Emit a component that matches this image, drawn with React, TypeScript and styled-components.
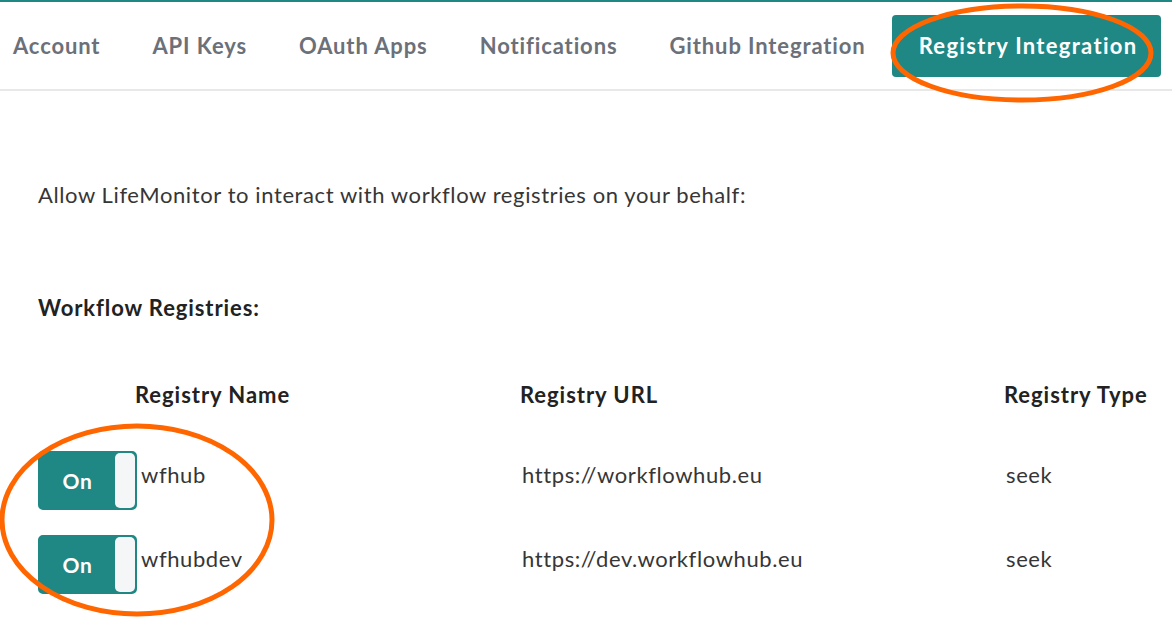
import styled, { createGlobalStyle } from "styled-components";

const teal = "#1f8784";

const GlobalStyle = createGlobalStyle`
	body {
		margin: 0;
		background: #fff;
		font-family: Lato, "Open Sans", sans-serif;
		color: #363636;
	}
`;

const Page = styled.div`
	position: relative;
	width: 1172px;
	height: 639px;
	overflow: hidden;
	box-sizing: border-box;
	border-top: 2px solid ${teal};
`;

const TabBar = styled.nav`
	display: flex;
	align-items: center;
	height: 87px;
	margin-left: -13px;
	border-bottom: 2px solid #e8e8e8;
`;

const Tab = styled.a<{ $active?: boolean }>`
	display: flex;
	align-items: center;
	height: 62px;
	padding: ${(p) => (p.$active ? "0 24px 0 27px" : "0 26px")};
	border-radius: 4px;
	font-size: 22px;
	font-weight: 700;
	letter-spacing: ${(p) => (p.$active ? "1.3px" : "0.88px")};
	white-space: nowrap;
	color: ${(p) => (p.$active ? "#fff" : "#6b7079")};
	background: ${(p) => (p.$active ? teal : "transparent")};
	cursor: pointer;
`;

const Content = styled.main`
	padding: 0 38px;
	font-size: 22px;
	letter-spacing: 0.6px;
`;

const Intro = styled.p`
	margin: 87px 0 0 0;
	line-height: 33px;
`;

const SectionTitle = styled.h3`
	margin: 80px 0 0 0;
	font-size: 22px;
	font-weight: 700;
	letter-spacing: 0.9px;
	line-height: 33px;
	color: #222;
`;

const Grid = styled.div`
	display: grid;
	grid-template-columns: 99px 385px 484px 1fr;
	margin-top: 54px;
	row-gap: 25px;
	align-items: center;
`;

const Head = styled.div`
	font-weight: 700;
	letter-spacing: 0.95px;
	white-space: nowrap;
	color: #222;
	line-height: 33px;
	margin-left: -2px;
	margin-bottom: 15px;
`;

const Cell = styled.div<{ $indent?: boolean }>`
	line-height: 33px;
	white-space: nowrap;
	padding-left: ${(p) => (p.$indent ? "4px" : "0")};
	margin-top: -12px;
`;

const Toggle = styled.button`
	display: flex;
	width: 99px;
	height: 59px;
	padding: 0;
	border: 2px solid ${teal};
	border-radius: 5px;
	background: ${teal};
	overflow: hidden;
	cursor: pointer;
`;

const ToggleLabel = styled.span`
	flex: 1;
	display: flex;
	align-items: center;
	justify-content: center;
	color: #fff;
	font-family: Lato, sans-serif;
	font-size: 21px;
	font-weight: 700;
	letter-spacing: 0.8px;
`;

const ToggleKnob = styled.span`
	width: 20px;
	background: #f5f6f8;
	border-radius: 5px;
`;

const Annotations = styled.svg`
	position: absolute;
	left: 0;
	top: 0;
	pointer-events: none;
`;

const tabs = ["Account", "API Keys", "OAuth Apps", "Notifications", "Github Integration", "Registry Integration"];

const registries = [
	{ name: "wfhub", url: "https://workflowhub.eu", type: "seek" },
	{ name: "wfhubdev", url: "https://dev.workflowhub.eu", type: "seek" },
];

const App = () => {
	return (
		<Page>
			<GlobalStyle />
			<TabBar>
				{tabs.map((t) => (
					<Tab key={t} $active={t === "Registry Integration"}>
						{t}
					</Tab>
				))}
			</TabBar>
			<Content>
				<Intro>Allow LifeMonitor to interact with workflow registries on your behalf:</Intro>
				<SectionTitle>Workflow Registries:</SectionTitle>
				<Grid>
					<div />
					<Head>Registry Name</Head>
					<Head>Registry URL</Head>
					<Head>Registry Type</Head>
					{registries.map((r) => [
						<Toggle key={r.name + "-t"}>
							<ToggleLabel>On</ToggleLabel>
							<ToggleKnob />
						</Toggle>,
						<Cell key={r.name + "-n"} $indent>
							{r.name}
						</Cell>,
						<Cell key={r.name + "-u"}>{r.url}</Cell>,
						<Cell key={r.name + "-k"}>{r.type}</Cell>,
					])}
				</Grid>
			</Content>
			<Annotations width="1172" height="639" viewBox="0 0 1172 639">
				<ellipse cx="1022" cy="51" rx="129" ry="47" fill="none" stroke="#ff6600" strokeWidth="5" />
				<ellipse cx="137" cy="518" rx="135" ry="94" fill="none" stroke="#ff6600" strokeWidth="5" />
			</Annotations>
		</Page>
	);
};

export default App;
